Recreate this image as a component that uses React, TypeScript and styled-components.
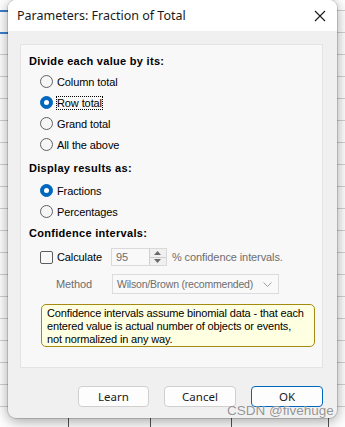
import React from 'react';
import styled, { createGlobalStyle } from 'styled-components';

const GlobalStyle = createGlobalStyle`
  html, body {
    margin: 0;
    padding: 0;
  }
`;

// spreadsheet grid peeking out behind the dialog
const Sheet = styled.div`
  position: relative;
  width: 345px;
  height: 427px;
  overflow: hidden;
  background-color: #ffffff;
  background-image:
    linear-gradient(to bottom, transparent 10px, #3d7fd0 10px, #3d7fd0 12px, transparent 12px, transparent 32px, #3d7fd0 32px, #3d7fd0 34px, transparent 34px),
    linear-gradient(to right, transparent 68px, #555 68px, #555 69px, transparent 69px, transparent 150px, #555 150px, #555 151px, transparent 151px, transparent 231px, #555 231px, #555 232px, transparent 232px, transparent 328px, #555 328px, #555 329px, transparent 329px),
    repeating-linear-gradient(to bottom, transparent 0, transparent 10px, #d0d0d0 10px, #d0d0d0 11px, transparent 11px, transparent 22px);
  background-size: 8px 40px, 100% 100%, 100% 100%;
  background-repeat: no-repeat, no-repeat, repeat;
  font-family: "Liberation Sans", Arial, sans-serif;
`;

const Dialog = styled.div`
  margin-left: 8px;
  width: 329px;
  height: 418px;
  border-radius: 8px;
  background: #f0f0f0;
  box-shadow: 0 3px 14px rgba(0, 0, 0, 0.38), 0 0 0 1px rgba(0, 0, 0, 0.14);
  display: flex;
  flex-direction: column;
  overflow: hidden;
`;

const TitleBar = styled.div`
  height: 31px;
  background: #ffffff;
  display: flex;
  align-items: center;
  justify-content: space-between;
  padding: 0 9px 0 9px;
`;

const Title = styled.span`
  font-family: "Noto Sans", "Open Sans", sans-serif;
  font-size: 12.5px;
  color: #1a1a1a;
`;

const CloseButton = styled.div`
  width: 14px;
  height: 14px;
  display: flex;
  align-items: center;
  justify-content: center;
  margin-right: 1px;
`;

const Body = styled.div`
  flex: 1;
  display: flex;
  flex-direction: column;
  padding: 13px 14px 0 12px;
`;

const Panel = styled.div`
  height: 324px;
  box-sizing: border-box;
  background: #f8f8f8;
  border: 1px solid #e3e3e3;
  padding: 5px 0 0 8px;
  display: flex;
  flex-direction: column;
`;

const Heading = styled.div<{ $gap?: number }>`
  height: 21px;
  margin-top: ${(p) => p.$gap ?? 0}px;
  display: flex;
  align-items: center;
  font-size: 11px;
  font-weight: bold;
  letter-spacing: 0.3px;
  color: #000;
`;

const OptionRow = styled.div<{ $gap?: number }>`
  height: 21px;
  margin-top: ${(p) => p.$gap ?? 0}px;
  padding-left: 11px;
  display: flex;
  align-items: center;
  gap: 3px;
  font-size: 11px;
  letter-spacing: -0.1px;
  color: #000;
`;

const RadioDot = styled.span<{ $on?: boolean }>`
  width: 13px;
  height: 13px;
  box-sizing: border-box;
  border-radius: 50%;
  flex-shrink: 0;
  position: relative;
  background: ${(p) => (p.$on ? '#0067c0' : '#f6f6f6')};
  border: 1px solid ${(p) => (p.$on ? '#0067c0' : '#606060')};

  &::after {
    content: '';
    display: ${(p) => (p.$on ? 'block' : 'none')};
    position: absolute;
    left: 3px;
    top: 3px;
    width: 5px;
    height: 5px;
    border-radius: 50%;
    background: #fff;
  }
`;

const Label = styled.span<{ $focus?: boolean }>`
  padding: 1px 1px;
  outline: ${(p) => (p.$focus ? '1px dotted #000' : 'none')};
  outline-offset: -1px;
`;

const CheckBox = styled.span`
  width: 13px;
  height: 13px;
  box-sizing: border-box;
  border: 1px solid #5d5d5d;
  border-radius: 2px;
  background: #f8f8f8;
  flex-shrink: 0;
`;

const CalcRow = styled(OptionRow)`
  height: 24px;
`;

const SpinBox = styled.div`
  margin-left: 5px;
  width: 56px;
  height: 18px;
  box-sizing: border-box;
  border: 1px solid #d9d9d9;
  background: #f9f9f9;
  display: flex;
`;

const SpinValue = styled.span`
  flex: 1;
  padding-left: 4px;
  display: flex;
  align-items: center;
  color: #6d6d6d;
  font-size: 11px;
`;

const SpinArrows = styled.div`
  width: 16px;
  border-left: 1px solid #cfcfcf;
  display: flex;
  flex-direction: column;
  background: #f0f0f0;
`;

const SpinHalf = styled.div`
  flex: 1;
  display: flex;
  align-items: center;
  justify-content: center;

  & + & {
    border-top: 1px solid #cfcfcf;
  }
`;

const Muted = styled.span`
  color: #6d6d6d;
  font-size: 11px;
  letter-spacing: -0.1px;
`;

const MethodRow = styled.div`
  height: 22px;
  margin-top: 4px;
  padding-left: 27px;
  display: flex;
  align-items: center;
`;

const MethodLabel = styled(Muted)`
  width: 56px;
`;

const Select = styled.div`
  width: 167px;
  height: 20px;
  box-sizing: border-box;
  border: 1px solid #dcdcdc;
  background: #f9f9f9;
  display: flex;
  align-items: center;
  justify-content: space-between;
  padding: 0 6px 0 4px;
  color: #6d6d6d;
  font-size: 10.5px;
  letter-spacing: -0.2px;
  white-space: nowrap;
`;

const Note = styled.div`
  margin: 9px 0 0 12px;
  width: 274px;
  height: 43px;
  box-sizing: border-box;
  background: #ffffe1;
  border: 1.5px solid #a38a10;
  border-radius: 5px;
  padding: 2px 0 0 5px;
  font-size: 11px;
  letter-spacing: -0.15px;
  line-height: 13px;
  color: #000;
  white-space: nowrap;
`;

const ButtonRow = styled.div`
  margin-top: 18px;
  display: flex;
  justify-content: flex-end;
  gap: 15px;
`;

const Button = styled.div<{ $primary?: boolean; $w: number }>`
  width: ${(p) => p.$w}px;
  height: 21px;
  box-sizing: border-box;
  border: 1px solid ${(p) => (p.$primary ? '#0067c0' : '#d0d0d0')};
  border-radius: 4px;
  background: #fdfdfd;
  display: flex;
  align-items: center;
  justify-content: center;
  font-family: "Noto Sans", "Open Sans", sans-serif;
  font-size: 11.5px;
  color: #1a1a1a;
`;

const Watermark = styled.div`
  position: absolute;
  left: 227px;
  top: 403px;
  font-family: "Liberation Sans", Arial, sans-serif;
  font-size: 13.5px;
  color: rgba(120, 120, 120, 0.8);
  text-shadow: 0 0 1px rgba(255, 255, 255, 0.9);
  white-space: nowrap;
`;

const App = () => {
  return (
    <Sheet>
      <GlobalStyle />
      <Dialog>
        <TitleBar>
          <Title>Parameters: Fraction of Total</Title>
          <CloseButton>
            <svg width="12" height="12" viewBox="0 0 12 12">
              <path d="M1 1 L11 11 M11 1 L1 11" stroke="#1a1a1a" strokeWidth="1.1" />
            </svg>
          </CloseButton>
        </TitleBar>
        <Body>
          <Panel>
            <Heading>Divide each value by its:</Heading>
            <OptionRow><RadioDot /><Label>Column total</Label></OptionRow>
            <OptionRow><RadioDot $on /><Label $focus>Row total</Label></OptionRow>
            <OptionRow><RadioDot /><Label>Grand total</Label></OptionRow>
            <OptionRow><RadioDot /><Label>All the above</Label></OptionRow>

            <Heading $gap={2}>Display results as:</Heading>
            <OptionRow $gap={2}><RadioDot $on /><Label>Fractions</Label></OptionRow>
            <OptionRow><RadioDot /><Label>Percentages</Label></OptionRow>

            <Heading>Confidence intervals:</Heading>
            <CalcRow $gap={2}>
              <CheckBox />
              <Label>Calculate</Label>
              <SpinBox>
                <SpinValue>95</SpinValue>
                <SpinArrows>
                  <SpinHalf>
                    <svg width="7" height="4" viewBox="0 0 7 4"><path d="M0 4 L3.5 0 L7 4 Z" fill="#6a6a6a" /></svg>
                  </SpinHalf>
                  <SpinHalf>
                    <svg width="7" height="4" viewBox="0 0 7 4"><path d="M0 0 L3.5 4 L7 0 Z" fill="#6a6a6a" /></svg>
                  </SpinHalf>
                </SpinArrows>
              </SpinBox>
              <Muted style={{ marginLeft: 2 }}>% confidence intervals.</Muted>
            </CalcRow>
            <MethodRow>
              <MethodLabel>Method</MethodLabel>
              <Select>
                <span>Wilson/Brown (recommended)</span>
                <svg width="9" height="5" viewBox="0 0 9 5">
                  <path d="M0.5 0.5 L4.5 4.5 L8.5 0.5" fill="none" stroke="#a0a0a0" strokeWidth="1" />
                </svg>
              </Select>
            </MethodRow>
            <Note>
              Confidence intervals assume binomial data - that each
              <br />
              entered value is actual number of objects or events,
              <br />
              not normalized in any way.
            </Note>
          </Panel>
          <ButtonRow>
            <Button $w={71}>Learn</Button>
            <Button $w={72}>Cancel</Button>
            <Button $w={72} $primary>OK</Button>
          </ButtonRow>
        </Body>
      </Dialog>
      <Watermark>CSDN @fivehuge</Watermark>
    </Sheet>
  );
};

export default App;
